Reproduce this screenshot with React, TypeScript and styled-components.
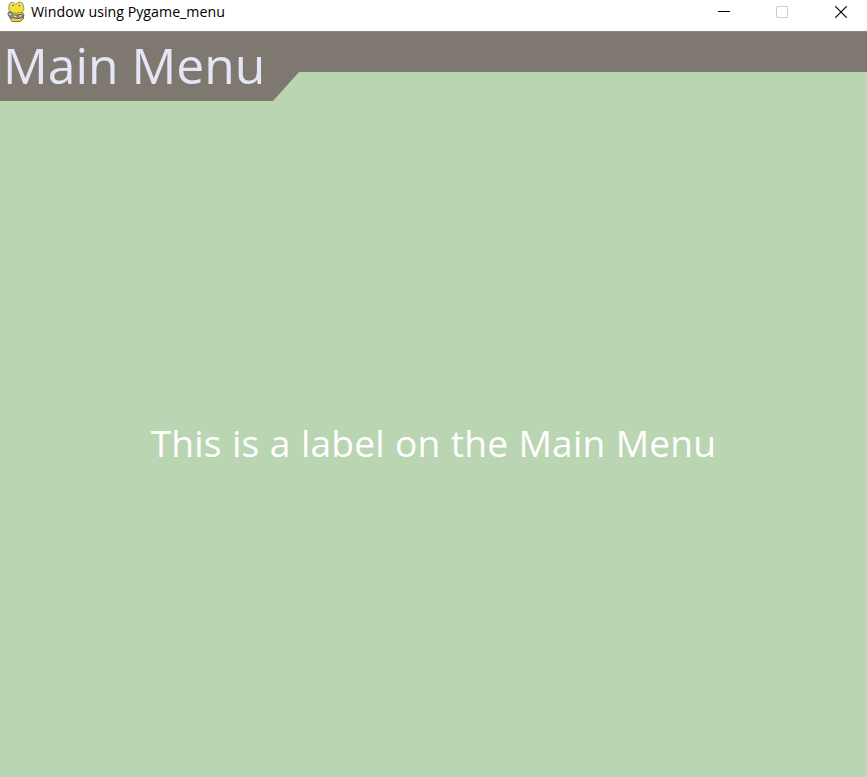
import React from "react";
import styled, { createGlobalStyle } from "styled-components";

const GlobalStyle = createGlobalStyle`
  html, body { margin: 0; padding: 0; overflow: hidden; }
`;

const Window = styled.main`
  display: flex;
  flex-direction: column;
  width: 100vw;
  height: 100vh;
  background: #bad5b1;
  overflow: hidden;
`;

const TitleBar = styled.header`
  display: flex;
  align-items: center;
  flex: 0 0 31px;
  height: 31px;
  box-sizing: border-box;
  padding: 0 0 7px 7px;
  background: #fff;
`;

const Caption = styled.span`
  flex: 1;
  margin-left: 6px;
  font: 14.2px/20px "Open Sans", "Noto Sans", sans-serif;
  letter-spacing: 0.02px;
  color: #000;
  white-space: nowrap;
`;

const Controls = styled.div`
  display: flex;
`;

const ControlButton = styled.button<{ $disabled?: boolean }>`
  display: flex;
  align-items: center;
  justify-content: center;
  width: 58px;
  height: 24px;
  padding: 0;
  border: 0;
  background: transparent;
  color: ${(p) => (p.$disabled ? "#cccccc" : "#000")};

  &:last-child {
    width: 56px;
    padding-left: 3px;
  }
`;

const MenuBar = styled.section`
  flex: 0 0 70px;
  height: 70px;
  box-sizing: border-box;
  background: #7e7871;
  border-top: 1px solid #8a857e;
  clip-path: polygon(0 0, 100% 0, 100% 41px, 299px 41px, 273px 70px, 0 70px);
`;

const MenuTitle = styled.h1`
  margin: 0;
  padding: 0 0 0 3px;
  font: 400 49.8px/66px "Open Sans", "Noto Sans", sans-serif;
  color: #e4e6f6;
  white-space: nowrap;
`;

const MenuBody = styled.section`
  display: flex;
  flex: 1;
  align-items: center;
  justify-content: center;
  padding-top: 7px;
`;

const Label = styled.p`
  margin: 0;
  font: 400 37.2px/52px "Open Sans", "Noto Sans", sans-serif;
  word-spacing: 0.5px;
  letter-spacing: 0.15px;
  color: #fff;
  white-space: nowrap;
`;

const SnakeIcon = () => (
  <svg width="18" height="22" viewBox="0 0 18 22">
    <path d="M4 10h10l2.8 3-.3 4.5-3 3H5L3 17z" fill="#e8d432" stroke="#5e5830" strokeWidth=".8" />
    <path
      d="M2 5C2 2.2 3.8.9 6 1.4L8.5 3.6l2.3-2.1C13.5.2 16.6 2 16.4 5.6c1 2.4.4 4.4-1.6 5.5-3 1.4-7.5 1.4-10.6 0C1.8 10 1.3 8 2 5z"
      fill="#f3df2e"
      stroke="#857822"
      strokeWidth=".7"
    />
    <circle cx="5.4" cy="4.5" r="1.9" fill="#dedbc2" />
    <circle cx="13" cy="4.5" r="1.9" fill="#dedbc2" />
    <circle cx="6" cy="4.6" r=".8" fill="#55543e" />
    <circle cx="12.5" cy="4.6" r=".8" fill="#55543e" />
    <path d="m.8 12.5 1.2-2 2.4 1 2.2 2.2 3.5.4 4-1 2.7 1.6-1.3 2.2-4.5.6-4.5-.6-3.5-.2-1.2-1.6z" fill="#8b8a8c" stroke="#4c4b4d" strokeWidth=".7" />
    <path d="m2.2 12.6 2 1M6.8 15.2l2.4.4M12.5 15l2-.4" stroke="#dcdce2" strokeWidth="1.3" />
  </svg>
);

export default function App() {
  return (
    <>
      <GlobalStyle />
      <Window>
        <TitleBar>
          <SnakeIcon />
          <Caption>Window using Pygame_menu</Caption>
          <Controls>
            <ControlButton aria-label="Minimize">
              <svg width="12" height="12" viewBox="0 0 12 12">
                <path d="M0 5.5h12" stroke="currentColor" />
              </svg>
            </ControlButton>
            <ControlButton aria-label="Maximize" disabled $disabled>
              <svg width="12" height="12" viewBox="0 0 12 12">
                <rect x=".5" y=".5" width="11" height="11" rx=".5" fill="none" stroke="currentColor" />
              </svg>
            </ControlButton>
            <ControlButton aria-label="Close">
              <svg width="12" height="12" viewBox="0 0 12 12">
                <path d="m.3.3 11.4 11.4M11.7.3.3 11.7" stroke="currentColor" strokeWidth="1.2" />
              </svg>
            </ControlButton>
          </Controls>
        </TitleBar>
        <MenuBar>
          <MenuTitle>Main Menu</MenuTitle>
        </MenuBar>
        <MenuBody>
          <Label>This is a label on the Main Menu</Label>
        </MenuBody>
      </Window>
    </>
  );
}
